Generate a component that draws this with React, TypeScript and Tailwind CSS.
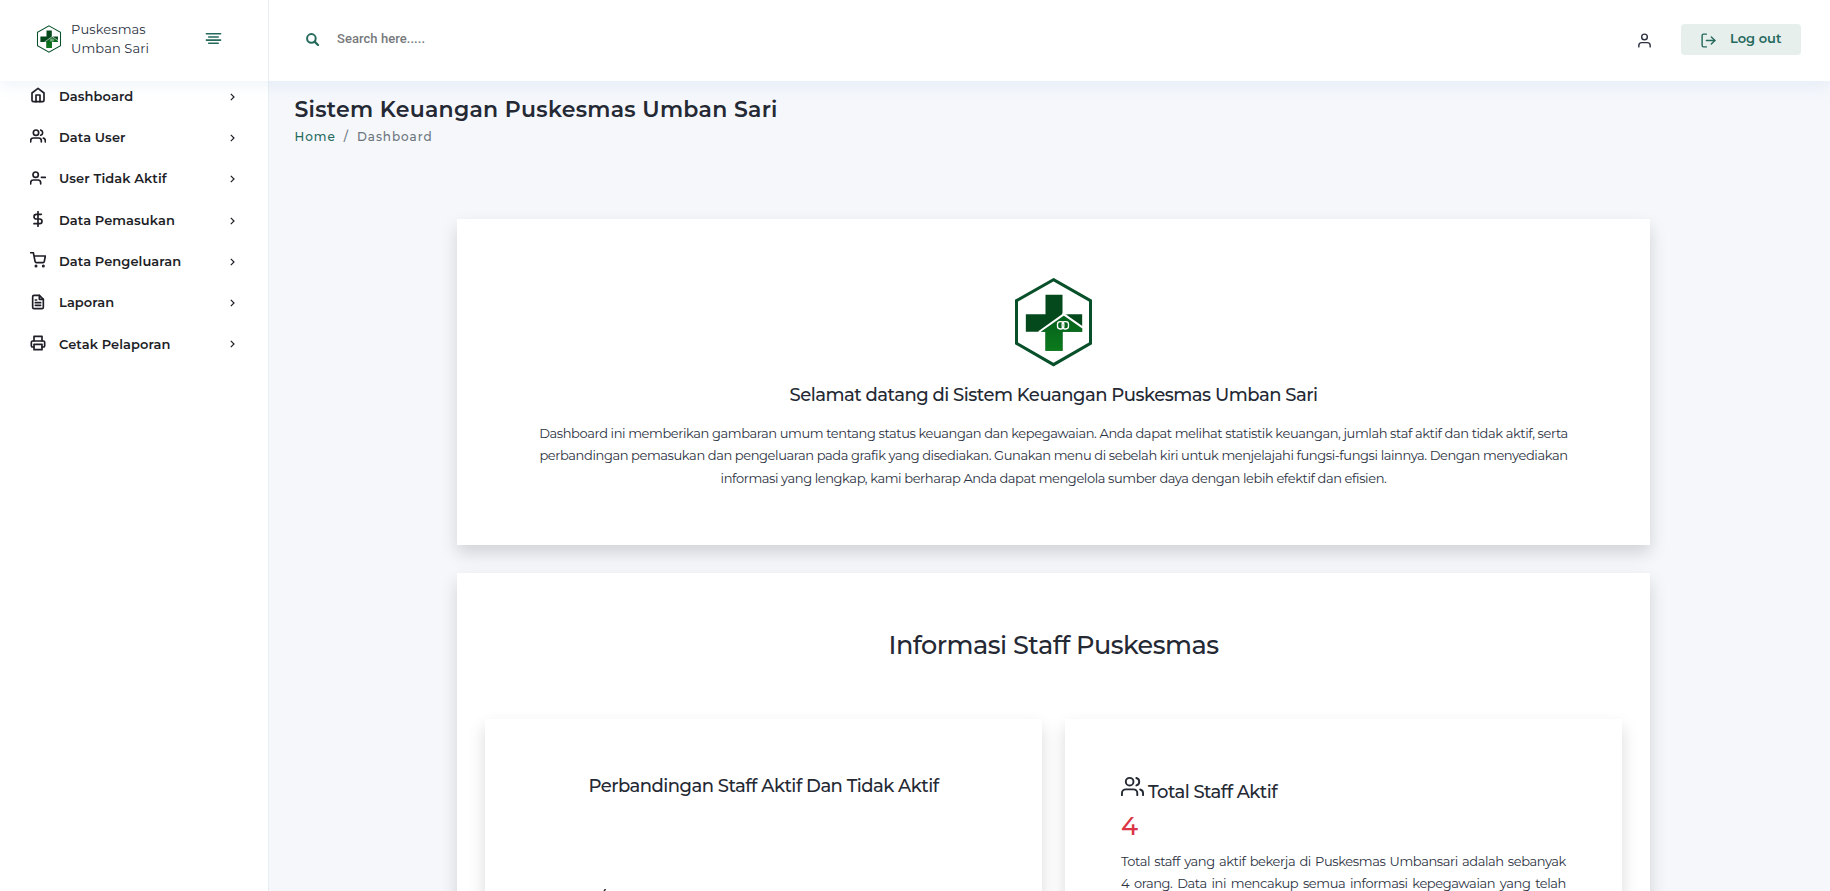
import type { ReactNode } from "react";
import type { IconType } from "react-icons";
import {
  FiAlignCenter,
  FiDollarSign,
  FiFileText,
  FiHome,
  FiLogOut,
  FiPrinter,
  FiShoppingCart,
  FiUser,
  FiUserMinus,
  FiUsers,
} from "react-icons/fi";

const menu: { label: string; icon: IconType }[] = [
  { label: "Dashboard", icon: FiHome },
  { label: "Data User", icon: FiUsers },
  { label: "User Tidak Aktif", icon: FiUserMinus },
  { label: "Data Pemasukan", icon: FiDollarSign },
  { label: "Data Pengeluaran", icon: FiShoppingCart },
  { label: "Laporan", icon: FiFileText },
  { label: "Cetak Pelaporan", icon: FiPrinter },
];

function Logo({ className, thin = false }: { className: string; thin?: boolean }) {
  return (
    <svg viewBox="104 52 236 270" className={className}>
      <defs>
        <linearGradient id="house" x1="0" y1="0" x2="0" y2="1">
          <stop offset="0" stopColor="#06601c" />
          <stop offset="1" stopColor="#0b7a1c" />
        </linearGradient>
      </defs>
      <path
        d="M222 60 333 123V251L222 315 111 251V123Z"
        fill="#fff"
        stroke="#07502a"
        strokeWidth={thin ? 10 : 9}
      />
      <path d="M198 105H249V164H308V216H249V273H198V216H139V164H198Z" fill="#04491c" />
      <path d="M186 216 253 168 308 206V216H249V273H198V216Z" fill="url(#house)" />
      <path d="M178 217 253 164 310 204" fill="none" stroke="#fff" strokeWidth="6" />
      <path d="M249 160H264V164H249Z" fill="#fff" />
      <rect x="234" y="186" width="19" height="22" rx="8" fill="none" stroke="#fff" strokeWidth="4" />
      <rect x="248" y="186" width="19" height="22" rx="8" fill="none" stroke="#fff" strokeWidth="4" />
    </svg>
  );
}

function Panel({ className = "", children }: { className?: string; children: ReactNode }) {
  return (
    <section className={`bg-white shadow-[0_8px_16px_rgba(0,0,0,0.15)] ${className}`}>{children}</section>
  );
}

function Header() {
  return (
    <header className="relative z-10 flex h-[81px] shrink-0 bg-white shadow-[0_6px_14px_rgba(140,180,225,0.12)]">
      <div className="flex w-[269px] shrink-0 items-center border-r border-[#e6eff3] pl-[36px] pb-[3px]">
        <Logo thin className="h-[28px] w-[26px]" />
        <p className="ml-[9px] w-[100px] text-[13px] leading-[19px] tracking-[0.1px] text-[#2c323f]">
          Puskesmas
          <br />
          Umban Sari
        </p>
        <FiAlignCenter className="-mt-px ml-[32.5px] size-[19px] text-[#24695c]" />
      </div>
      <div className="flex flex-1 items-center pl-[37px] pr-[29px] pb-[3px]">
        <svg viewBox="0 0 13 13" className="size-[13px] text-[#24695c]">
          <circle cx="5.4" cy="5.4" r="4.3" fill="none" stroke="currentColor" strokeWidth="2" />
          <path d="M8.6 8.6 12 12" stroke="currentColor" strokeWidth="2.2" strokeLinecap="round" />
        </svg>
        <span className="ml-[18px] font-['Roboto'] text-[13px] font-medium tracking-[0.05px] text-[#77797c]">
          Search here.....
        </span>
        <FiUser className="mt-[3px] ml-auto size-[17px] text-[#2c323f]" />
        <button className="ml-[28px] flex h-[31px] w-[120px] items-center rounded bg-[#e7efed] pl-[19px] text-[13px] font-semibold text-[#24695c]">
          <FiLogOut className="mt-[2px] size-[17px]" />
          <span className="ml-[13px]">Log out</span>
        </button>
      </div>
    </header>
  );
}

function Sidebar() {
  return (
    <nav className="w-[269px] shrink-0 border-r border-[#e6eff3] bg-white">
      <ul className="-mt-[5px]">
        {menu.map(({ label, icon: Icon }) => (
          <li key={label} className="flex h-[41.3px] items-center pr-[33px] pl-[29.5px] text-[#1d1e26]">
            <Icon strokeWidth={2.5} className="-mt-[3px] size-[16px]" />
            <span className="ml-[13.5px] text-[13px] font-semibold tracking-[0.08px]">{label}</span>
            <svg viewBox="0 0 5 8" className="ml-auto h-[8px] w-[5px]">
              <path d="M.8 .8 4 4 .8 7.2" fill="none" stroke="currentColor" strokeWidth="1.2" />
            </svg>
          </li>
        ))}
      </ul>
    </nav>
  );
}

export default function App() {
  return (
    <div className="flex h-[891px] w-full flex-col overflow-hidden bg-[#f5f7fb] font-['Montserrat','Inter',sans-serif] text-[#242934]">
      <Header />
      <div className="flex min-h-0 flex-1">
        <Sidebar />
        <main className="min-w-0 flex-1 overflow-hidden">
          <div className="h-[138px] pt-[15px] pl-[25.5px]">
            <h1 className="text-[22px] leading-[28px] font-semibold tracking-[0.28px]">
              Sistem Keuangan Puskesmas Umban Sari
            </h1>
            <p className="mt-[3px] flex text-[12px] leading-[20px] font-medium tracking-[0.95px] text-[#6c757d]">
              <span className="text-[#24695c]">Home</span>
              <span className="mx-[8px]">/</span>
              <span>Dashboard</span>
            </p>
          </div>
          <div className="ml-[188px] flex w-[1193px] flex-col gap-[28px]">
            <Panel className="flex h-[326px] shrink-0 flex-col items-center pt-[58px] text-center">
              <Logo className="h-[90px] w-[79px]" />
              <h2 className="mt-[16px] text-[18px] leading-[24px] font-medium tracking-[-0.5px]">
                Selamat datang di Sistem Keuangan Puskesmas Umban Sari
              </h2>
              <p className="mt-[15px] text-[13px] leading-[22.4px] tracking-[-0.4px] whitespace-nowrap text-[#2c323f]">
                Dashboard ini memberikan gambaran umum tentang status keuangan dan kepegawaian. Anda dapat melihat
                statistik keuangan, jumlah staf aktif dan tidak aktif, serta
                <br />
                perbandingan pemasukan dan pengeluaran pada grafik yang disediakan. Gunakan menu di sebelah kiri untuk
                menjelajahi fungsi-fungsi lainnya. Dengan menyediakan
                <br />
                informasi yang lengkap, kami berharap Anda dapat mengelola sumber daya dengan lebih efektif dan efisien.
              </p>
            </Panel>
            <Panel className="h-[600px] shrink-0 px-[28px] pt-[54px]">
              <h2 className="text-center text-[25.5px] leading-[36px] font-medium tracking-[-0.5px]">
                Informasi Staff Puskesmas
              </h2>
              <div className="mt-[56px] flex gap-[23px]">
                <Panel className="flex h-[440px] w-[557px] flex-col items-center pt-[55px]">
                  <h3 className="text-[18px] leading-[24px] font-medium tracking-[-0.52px]">
                    Perbandingan Staff Aktif Dan Tidak Aktif
                  </h3>
                  <svg viewBox="0 0 4 6" className="mt-[91px] mr-[320px] h-[6px] w-[4px]">
                    <path d="M3.4 0 .4 5" stroke="#333" strokeWidth="1.5" />
                  </svg>
                </Panel>
                <Panel className="h-[440px] w-[557px] px-[56px] pt-[56px]">
                  <h3 className="flex items-end text-[18px] leading-[24px] font-medium tracking-[-0.55px]">
                    <FiUsers className="mb-[6px] size-[23px]" />
                    <span className="ml-[4px]">Total Staff Aktif</span>
                  </h3>
                  <p className="mt-[6px] text-[25.5px] leading-[32px] font-medium text-[#dc3545]">4</p>
                  <p className="mt-[8px] text-[13px] leading-[22.4px] tracking-[-0.4px] text-[#2c323f]">
                    <span className="block text-justify [text-align-last:justify]">
                      Total staff yang aktif bekerja di Puskesmas Umbansari adalah sebanyak
                    </span>
                    <span className="block text-justify [text-align-last:justify]">
                      4 orang. Data ini mencakup semua informasi kepegawaian yang telah
                    </span>
                  </p>
                </Panel>
              </div>
            </Panel>
          </div>
        </main>
      </div>
    </div>
  );
}
